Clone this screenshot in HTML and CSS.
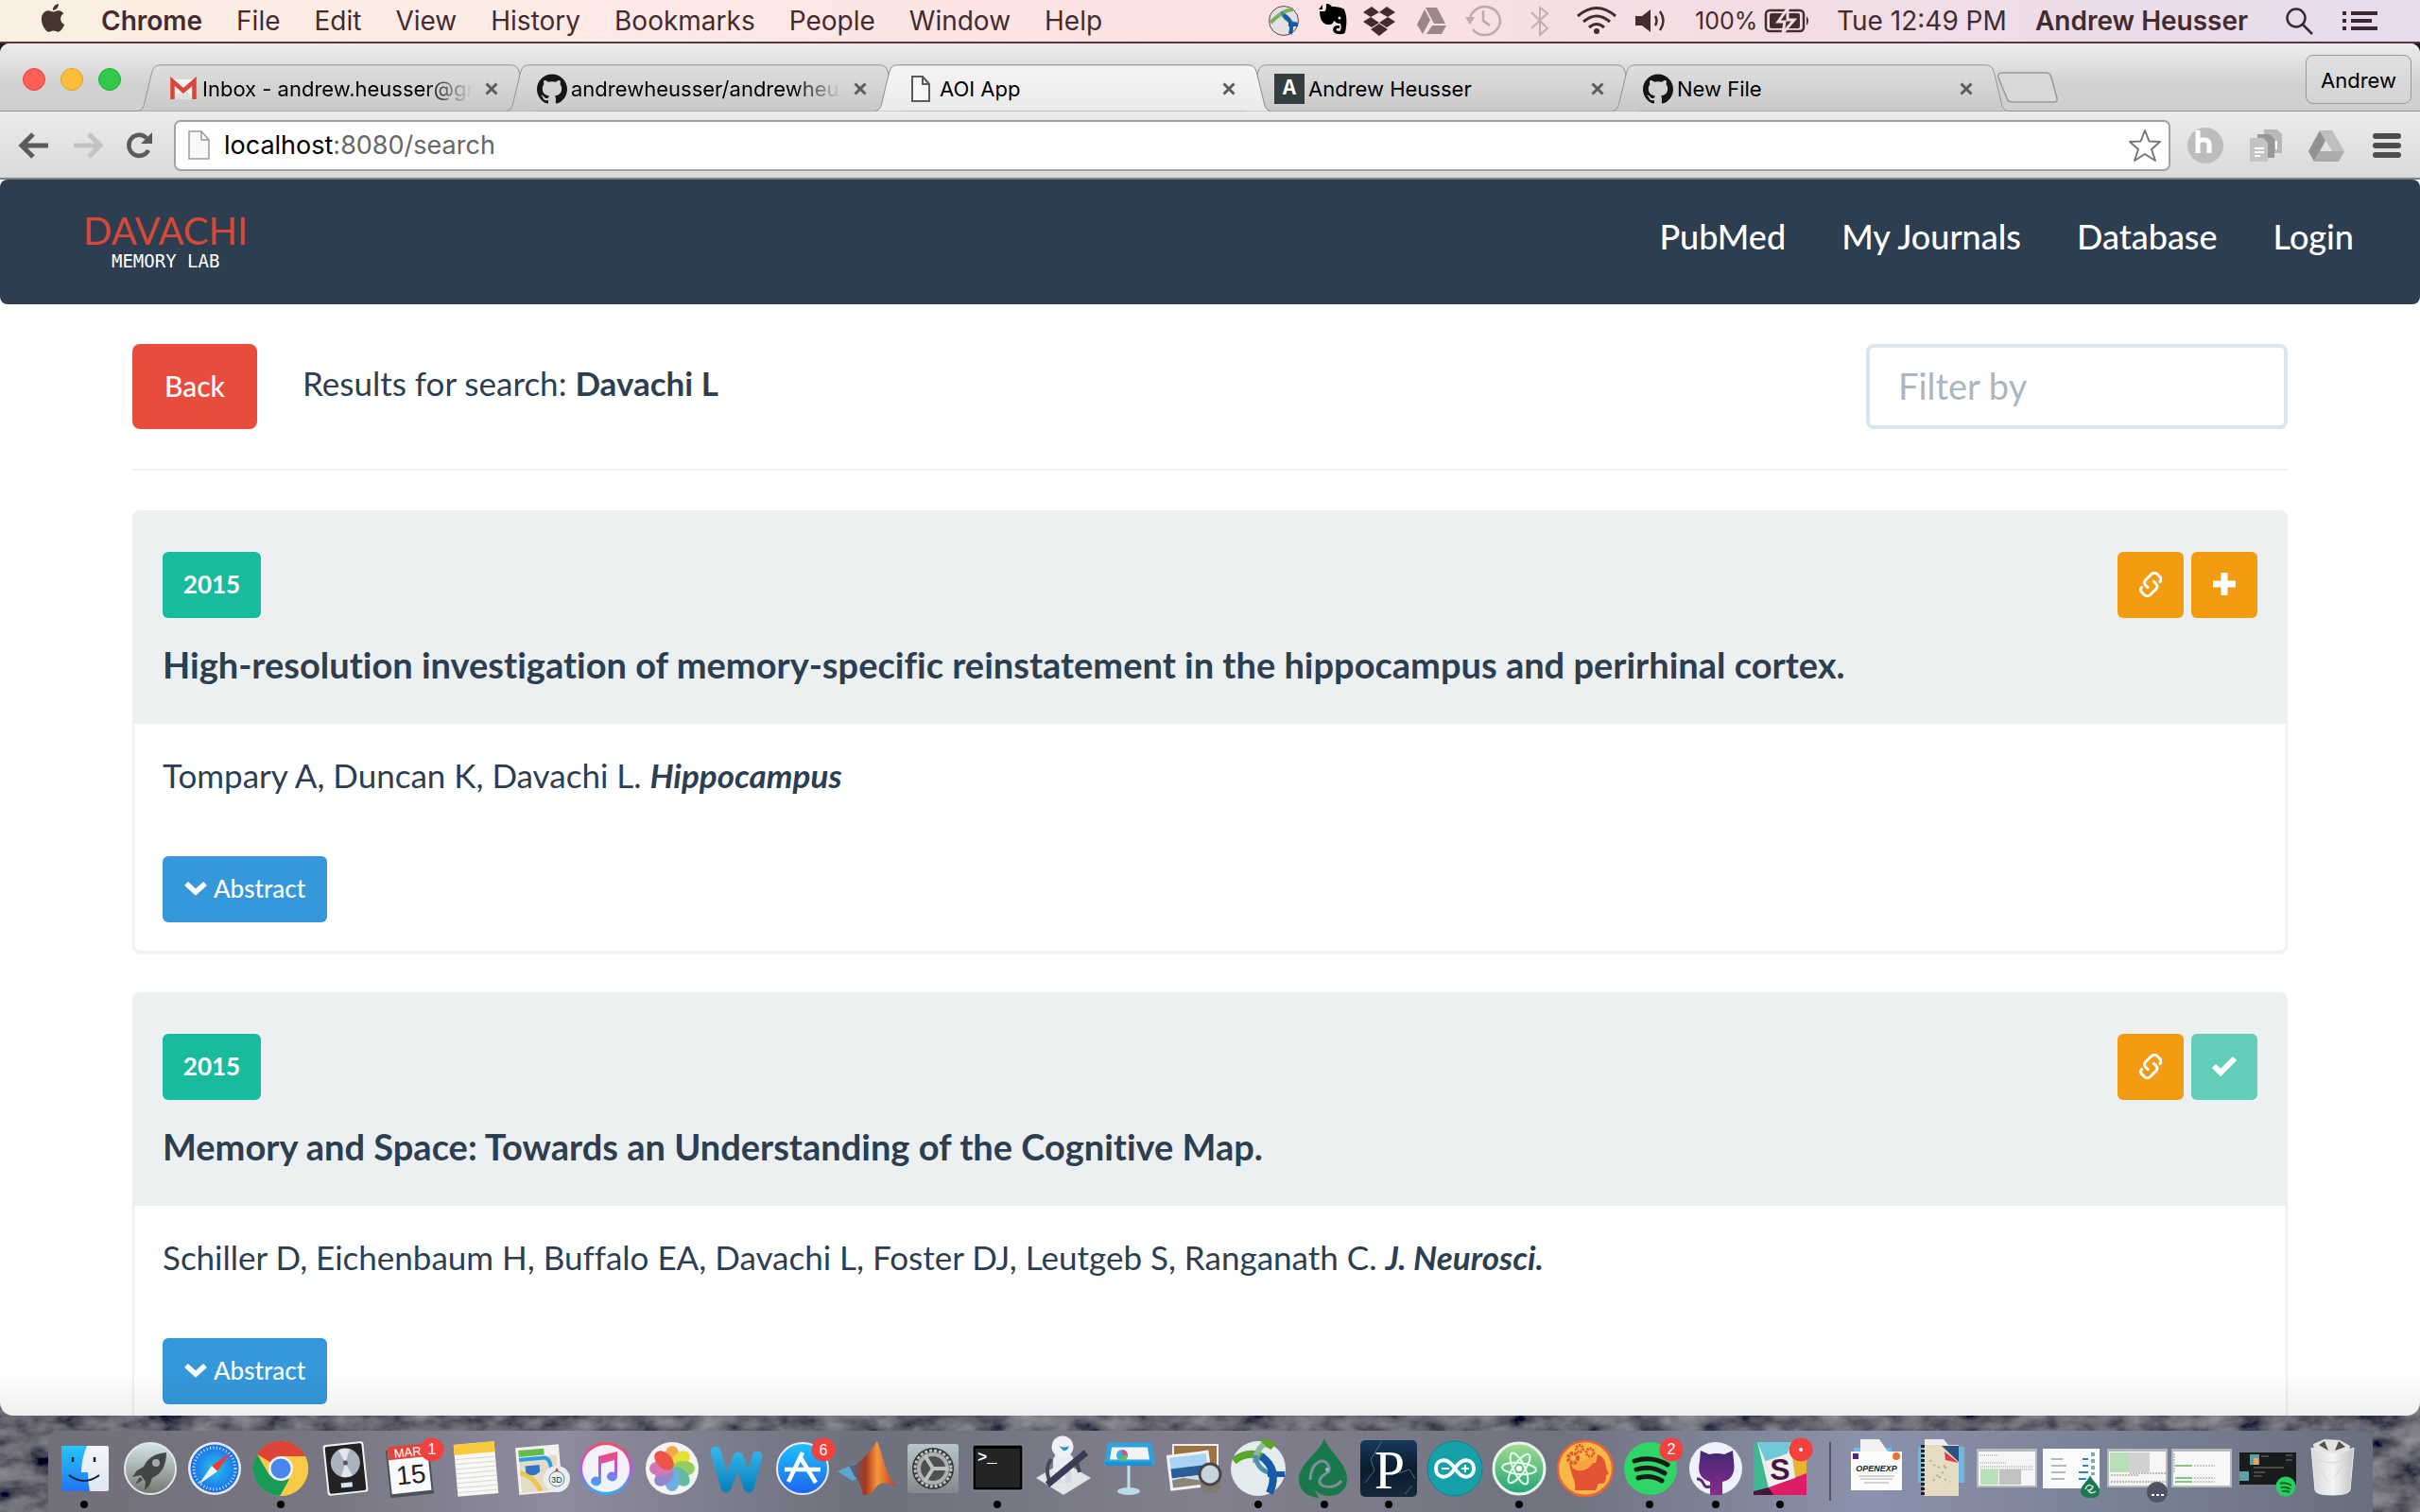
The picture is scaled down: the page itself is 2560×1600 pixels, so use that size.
FILE: index.html
```html
<!DOCTYPE html>
<html lang="en">
<head>
<meta charset="utf-8">
<title>AOI App</title>
<link rel="stylesheet" href="styles.css">
</head>
<body>
<svg class="defs" aria-hidden="true">
  <defs>
    <symbol id="github" viewBox="0 0 24 24"><path d="M12 .297c-6.63 0-12 5.373-12 12 0 5.303 3.438 9.8 8.205 11.385.6.113.82-.258.82-.577 0-.285-.01-1.04-.015-2.04-3.338.724-4.042-1.61-4.042-1.61C4.422 18.07 3.633 17.7 3.633 17.7c-1.087-.744.084-.729.084-.729 1.205.084 1.838 1.236 1.838 1.236 1.07 1.835 2.809 1.305 3.495.998.108-.776.417-1.305.76-1.605-2.665-.3-5.466-1.332-5.466-5.93 0-1.31.465-2.38 1.235-3.22-.135-.303-.54-1.523.105-3.176 0 0 1.005-.322 3.3 1.23.96-.267 1.98-.399 3-.405 1.02.006 2.04.138 3 .405 2.28-1.552 3.285-1.23 3.285-1.23.645 1.653.24 2.873.12 3.176.765.84 1.23 1.91 1.23 3.22 0 4.61-2.805 5.625-5.475 5.92.42.36.81 1.096.81 2.22 0 1.606-.015 2.896-.015 3.286 0 .315.21.69.825.57C20.565 22.092 24 17.592 24 12.297c0-6.627-5.373-12-12-12"/></symbol>
    <symbol id="link" viewBox="0 0 24 27"><g fill="none" stroke="#fff" stroke-width="3"><path d="M9 18.500L5.500 15a4 4 0 0 1 0-5L12 3.500a4.500 4.500 0 0 1 6 0l3 3a4 4 0 0 1 0 5l-1 1" transform="translate(1 -1)"/><path d="M14.500 8.500L18 12a4 4 0 0 1 0 5l-6.500 6.500a4.500 4.500 0 0 1-6 0l-3-3a4 4 0 0 1 0-5l1-1" transform="translate(0 1)"/></g></symbol>
    <symbol id="tab" viewBox="0 0 418 50"><path d="M0 49.500C5 48 6 45 7 40L14 11C16 3 18 .8 25 .8H393C400 .8 402 3 404 11L411 40C412 45 413 48 418 49.500"/></symbol>
    <symbol id="close" viewBox="0 0 16 16"><path d="M2.500 2.500l11 11M13.500 2.500l-11 11" stroke="#5d5d5d" stroke-width="3"/></symbol>
    <linearGradient id="gTab" x2="0" y2="1"><stop stop-color="#dedede"/><stop offset="1" stop-color="#c9c9c9"/></linearGradient>
    <linearGradient id="gTabOn" x2="0" y2="1"><stop stop-color="#f5f5f5"/><stop offset="1" stop-color="#ebebeb"/></linearGradient>
    <linearGradient id="gFinder" x2="0" y2="1"><stop stop-color="#26c6fb"/><stop offset="1" stop-color="#2275f1"/></linearGradient>
    <linearGradient id="gFace" x2="0" y2="1"><stop stop-color="#f4f6fa"/><stop offset="1" stop-color="#dfe6f1"/></linearGradient>
    <linearGradient id="gRocket" x2="0" y2="1"><stop stop-color="#d5e6ea"/><stop offset="1" stop-color="#76776f"/></linearGradient>
    <radialGradient id="gSafari"><stop stop-color="#28c5ee"/><stop offset="1" stop-color="#1b6ce8"/></radialGradient>
    <linearGradient id="gTunes" x2="0" y2="1"><stop stop-color="#fa4b5f"/><stop offset=".5" stop-color="#b758e6"/><stop offset="1" stop-color="#2bb1f5"/></linearGradient>
    <linearGradient id="gStore" x2="0" y2="1"><stop stop-color="#1fc3fb"/><stop offset="1" stop-color="#1d63ee"/></linearGradient>
    <linearGradient id="gWord" x2="0" y2="1"><stop stop-color="#33b4e8"/><stop offset="1" stop-color="#0b83bd"/></linearGradient>
    <linearGradient id="gMat"><stop stop-color="#3f6f91"/><stop offset=".35" stop-color="#a8351f"/><stop offset=".6" stop-color="#f5973d"/><stop offset="1" stop-color="#c0351e"/></linearGradient>
    <linearGradient id="gMetal" x2="0" y2="1"><stop stop-color="#b9c6cc"/><stop offset="1" stop-color="#83888a"/></linearGradient>
    <linearGradient id="gAtom" x2="0" y2="1"><stop stop-color="#a5dd90"/><stop offset="1" stop-color="#1fa477"/></linearGradient>
    <linearGradient id="gCat" x2="0" y2="1"><stop stop-color="#41286f"/><stop offset="1" stop-color="#8b2a91"/></linearGradient>
    <linearGradient id="gNavy" x2="0" y2="1"><stop stop-color="#173a5c"/><stop offset=".5" stop-color="#0b1b2c"/><stop offset="1" stop-color="#14293b"/></linearGradient>
    <linearGradient id="gTrash"><stop stop-color="#d6d6d8"/><stop offset=".5" stop-color="#f4f4f4"/><stop offset="1" stop-color="#c4c4c8"/></linearGradient>
    <filter id="rock" x="0" y="0" width="100%" height="100%"><feTurbulence type="fractalNoise" baseFrequency=".03 .05" numOctaves="5" seed="8"/><feColorMatrix values=".4 0 0 0 -.07  .4 0 0 0 -.07  .4 0 0 0 -.04  0 0 0 0 1"/></filter>
  </defs>
</svg>

<div class="desktop">
  <svg class="wallpaper" aria-hidden="true"><rect width="100%" height="100%" filter="url(#rock)"/></svg>

  <header class="menubar">
    <nav class="menus" aria-label="Menu bar">
      <svg class="apple" viewBox="0 0 24 25" aria-hidden="true"><path fill="#47352f" d="M12.152 6.896c-.948 0-2.415-1.078-3.960-1.040-2.040.027-3.910 1.183-4.961 3.014-2.117 3.675-.546 9.103 1.519 12.090 1.013 1.454 2.208 3.090 3.792 3.039 1.520-.065 2.090-.987 3.935-.987 1.831 0 2.350.987 3.960.948 1.637-.026 2.676-1.480 3.676-2.948 1.156-1.688 1.636-3.325 1.662-3.415-.039-.013-3.182-1.221-3.220-4.857-.026-3.040 2.480-4.494 2.597-4.559-1.429-2.090-3.623-2.324-4.390-2.376-2-.156-3.675 1.090-4.610 1.090zM15.530 3.830c.843-1.012 1.400-2.427 1.245-3.830-1.207.052-2.662.805-3.532 1.818-.780.896-1.454 2.338-1.273 3.714 1.338.104 2.715-.688 3.559-1.701"/></svg>
      <b>Chrome</b><span>File</span><span>Edit</span><span>View</span><span>History</span><span>Bookmarks</span><span>People</span><span>Window</span><span>Help</span>
    </nav>
    <div class="status">
      <svg width="45" height="44"><circle cx="18" cy="22" r="15.500" fill="#e6dfe4" stroke="#5b4a4c"/><path d="M4 24q14-14 24-14" fill="none" stroke="#79b05b" stroke-width="4"/><path d="M16 12q2 11 16 13" fill="none" stroke="#3f8a98" stroke-width="3"/><path d="M18 16q11 6 7 20M23 26h10" fill="none" stroke="#1559a8" stroke-width="4"/></svg>
      <svg width="48" height="44"><path fill="#000" d="M18 4c4 0 5 2 6 3 6 0 11 1 13 3 3 7 3 15 1 24-1 3-9 3-12 0-2-3 0-7 3-7h3v3h-3c-1 2 0 3 3 3 2-1 2-5 1-8-6 0-5-3-7-3-1 4-3 4-7 4-6-1-8-8-8-14h5c2 0 2-5 2-8z"/><path fill="#000" d="M10 10l4-5v5z"/><circle cx="32" cy="19" r="1.500" fill="#f7dfe2"/></svg>
      <svg width="55" height="44"><g fill="#432b2f"><path d="M9 13l9-6 8 6-9 5zM43 13l-9-6-8 6 9 5zM9 23l8-5 9 6-8 5zM43 23l-8-5-9 6 8 5zM17 31l9-6 9 6-9 7z"/></g></svg>
      <svg width="52" height="44"><g fill="#9b8689"><path d="M20 8h12l9 17H29zM19 10l6 11-8 15-6-10zM27 27h15l-5 9H21z"/></g></svg>
      <svg width="63" height="44" fill="none" stroke="#bfa9ae" stroke-width="2.500"><path d="M15 24a16 15 0 1 1 3 7M29 11v11l7 5"/><path fill="#bfa9ae" stroke="none" d="M10 18h10l-5 8z"/></svg>
      <svg width="52" height="44" fill="none" stroke="#c3aeb3" stroke-width="2"><path d="M17 13l17 17-8 7V8l8 6-17 16"/></svg>
      <svg width="65" height="44" fill="none" stroke="#432b2f" stroke-width="3"><path d="M14 17q20-17 40 0M20 23q14-12 28 0M26 29q8-7 16 0"/><circle cx="34" cy="33" r="3" fill="#432b2f" stroke="none"/></svg>
      <svg width="60" height="44"><path fill="#432b2f" d="M10 17h7l9-7v24l-9-7h-7z"/><path d="M31 17q3 5 0 10M36 12q7 10 0 20" fill="none" stroke="#432b2f" stroke-width="2.500"/></svg>
      <span class="percent">100%</span>
      <svg width="77" height="44"><rect x="2" y="11" width="40" height="22" rx="4" fill="none" stroke="#432b2f" stroke-width="2.500"/><rect x="6" y="14" width="32" height="16" rx="2" fill="#432b2f"/><path d="M25 9l-10 14h7l-2 12 12-14h-7z" fill="#432b2f" stroke="#f2dde2" stroke-width="3"/><path fill="#432b2f" d="M45 17q4 5 0 10z"/></svg>
      <span class="clock">Tue 12:49 PM</span>
      <b class="user">Andrew Heusser</b>
      <svg width="60" height="44" fill="none" stroke="#3b2833" stroke-width="2.500"><circle cx="11" cy="19" r="9.500"/><path d="M18 26l10 10"/></svg>
      <svg width="82" height="44" fill="#3b2833"><path d="M0 12h4v4H0zM9 12h28v4H9zM0 20h4v4H0zM9 20h22v4H9zM0 28h4v4H0zM9 28h28v4H9z"/></svg>
    </div>
  </header>

  <div class="window">
    <div class="titlebar">
      <div class="lights"><i class="light red"></i><i class="light yellow"></i><i class="light green"></i></div>
      <div class="tabs">
        <div class="tab">
          <svg class="shape" aria-hidden="true"><use href="#tab" fill="url(#gTab)" stroke="#939393"/></svg>
          <svg class="fav" viewBox="0 0 32 32" aria-hidden="true"><path fill="#f3f3f3" d="M3 6h26v21H3z"/><path fill="#dfdfdf" d="M3 27l13-11 13 11z"/><path fill="none" stroke="#dc4437" stroke-width="4.500" d="M4.500 27V8L16 18 27.500 8v19"/></svg>
          <span class="label fade">Inbox - andrew.heusser@gr</span>
          <button class="x" aria-label="Close tab"><svg width="16" height="16"><use href="#close"/></svg></button>
        </div>
        <div class="tab">
          <svg class="shape" aria-hidden="true"><use href="#tab" fill="url(#gTab)" stroke="#939393"/></svg>
          <svg class="fav" aria-hidden="true"><use href="#github" fill="#151515"/></svg>
          <span class="label fade">andrewheusser/andrewheu</span>
          <button class="x" aria-label="Close tab"><svg width="16" height="16"><use href="#close"/></svg></button>
        </div>
        <div class="tab active">
          <svg class="shape" aria-hidden="true"><use href="#tab" fill="url(#gTabOn)" stroke="#8b8b8b"/></svg>
          <svg class="fav" viewBox="0 0 32 32" aria-hidden="true"><path d="M7 3h11l7 8v18H7zM18 3v8h7" fill="#f8f8f8" stroke="#5b5b5b" stroke-width="2"/></svg>
          <span class="label">AOI App</span>
          <button class="x" aria-label="Close tab"><svg width="16" height="16"><use href="#close"/></svg></button>
        </div>
        <div class="tab">
          <svg class="shape" aria-hidden="true"><use href="#tab" fill="url(#gTab)" stroke="#939393"/></svg>
          <span class="fav letter" aria-hidden="true">A</span>
          <span class="label">Andrew Heusser</span>
          <button class="x" aria-label="Close tab"><svg width="16" height="16"><use href="#close"/></svg></button>
        </div>
        <div class="tab">
          <svg class="shape" aria-hidden="true"><use href="#tab" fill="url(#gTab)" stroke="#939393"/></svg>
          <svg class="fav" aria-hidden="true"><use href="#github" fill="#151515"/></svg>
          <span class="label">New File</span>
          <button class="x" aria-label="Close tab"><svg width="16" height="16"><use href="#close"/></svg></button>
        </div>
        <button class="newtab" aria-label="New tab"><svg width="66" height="34"><path d="M6 1h46q5 0 6 5l6 22q1 4-3 4H17q-5 0-6-4L2 6q-1-5 4-5z" fill="#d9d9d9" stroke="#999" stroke-width="1.500"/></svg></button>
      </div>
      <button class="profile">Andrew</button>
    </div>
    <div class="toolbar">
      <button class="tool" aria-label="Back"><svg width="34" height="30"><path d="M32 15H5M16 3L4 15l12 12" fill="none" stroke="#5b5b5b" stroke-width="5"/></svg></button>
      <button class="tool" aria-label="Forward"><svg width="34" height="30"><path d="M2 15h27M18 3l12 12-12 12" fill="none" stroke="#c3c3c3" stroke-width="5"/></svg></button>
      <button class="tool reload" aria-label="Reload"><svg width="30" height="30"><path d="M24 20A11 11 0 1 1 22 7" fill="none" stroke="#5b5b5b" stroke-width="4.500"/><path fill="#5b5b5b" d="M28 1v12H16z"/></svg></button>
      <div class="address">
        <svg width="24" height="32" aria-hidden="true"><path d="M1 1h13l8 9v20H1zM14 1v9h8" fill="#f8f8f8" stroke="#9a9a9a" stroke-width="1.500"/></svg>
        <a href="#">localhost<span>:8080/search</span></a>
        <svg width="38" height="38" aria-hidden="true"><path d="M19 3l4.500 11.500L35 15l-9 8 4 12-11-7-11 7 4-12-9-8 11.500-.5z" fill="#fff" stroke="#777" stroke-width="2" stroke-linejoin="round"/></svg>
      </div>
      <svg class="ext" viewBox="0 0 40 40" aria-hidden="true"><circle cx="20" cy="20" r="19" fill="#bdbdbd"/><path d="M12 4v24M12 19q0-5 5-5h2q5 0 5 5v9" fill="none" stroke="#fff" stroke-width="5"/></svg>
      <svg class="ext" viewBox="0 0 40 40" aria-hidden="true"><path fill="#b9b9b9" d="M18 3h14l5 5v20H18z"/><path fill="#989898" d="M11 8h13l5 5v20H11z"/><path fill="#c3c3c3" d="M3 12h14l5 5v20H3z"/><path d="M8 23h10M8 27h10M8 31h6M31 15v9" stroke="#fff" stroke-width="2"/></svg>
      <svg class="ext" viewBox="0 0 40 40" aria-hidden="true"><path fill="#929292" d="M13 4l6 11-12 22L1 26z"/><path fill="#bfbfbf" d="M13 4h13l13 22H26z"/><path fill="#acacac" d="M13 26h26l-6 11H7z"/></svg>
      <button class="tool" aria-label="Menu"><svg width="30" height="28" fill="#4d4d4d"><rect width="30" height="6" y="1" rx="3"/><rect width="30" height="6" y="11" rx="3"/><rect width="30" height="6" y="21" rx="3"/></svg></button>
    </div>

    <main class="page">
      <nav class="navbar">
        <a class="brand" href="#"><span class="brand-name">DAVACHI</span><span class="brand-sub">MEMORY LAB</span></a>
        <div class="links"><a href="#">PubMed</a><a href="#">My Journals</a><a href="#">Database</a><a href="#">Login</a></div>
      </nav>
      <div class="container">
        <div class="search-row">
          <button class="btn back">Back</button>
          <p class="results">Results for search: <b>Davachi L</b></p>
          <input class="filter" type="text" placeholder="Filter by" aria-label="Filter by">
        </div>
        <hr>
        <article class="card">
          <div class="card-head">
            <div class="card-actions">
              <button class="btn year">2015</button>
              <button class="btn square" aria-label="Link"><svg width="24" height="27"><use href="#link"/></svg></button>
              <button class="btn square" aria-label="Add"><svg width="24" height="24"><path d="M12 0v24M0 12h24" stroke="#fff" stroke-width="7"/></svg></button>
            </div>
            <h2>High-resolution investigation of memory-specific reinstatement in the hippocampus and perirhinal cortex.</h2>
          </div>
          <div class="card-body">
            <p>Tompary A, Duncan K, Davachi L. <b><i>Hippocampus</i></b></p>
            <button class="btn abstract"><svg width="24" height="16" aria-hidden="true"><path d="M2 3l10 9 10-9" fill="none" stroke="#fff" stroke-width="5.500"/></svg>Abstract</button>
          </div>
        </article>
        <article class="card">
          <div class="card-head">
            <div class="card-actions">
              <button class="btn year">2015</button>
              <button class="btn square" aria-label="Link"><svg width="24" height="27"><use href="#link"/></svg></button>
              <button class="btn square saved" aria-label="Saved"><svg width="28" height="24"><path d="M3 12l7 7L25 4" fill="none" stroke="#fff" stroke-width="6"/></svg></button>
            </div>
            <h2>Memory and Space: Towards an Understanding of the Cognitive Map.</h2>
          </div>
          <div class="card-body">
            <p>Schiller D, Eichenbaum H, Buffalo EA, Davachi L, Foster DJ, Leutgeb S, Ranganath C. <b><i>J. Neurosci.</i></b></p>
            <button class="btn abstract"><svg width="24" height="16" aria-hidden="true"><path d="M2 3l10 9 10-9" fill="none" stroke="#fff" stroke-width="5.500"/></svg>Abstract</button>
          </div>
        </article>
      </div>
    </main>
  </div>

  <footer class="dock-area">
    <div class="dock">
      <svg class="app"><path fill="url(#gFinder)" d="M10 16h48v48H10z"/><path fill="url(#gFace)" d="M34 16h24q2 0 2 2v44q0 2-2 2H40q-2-9-2-20h-7q0-14 6-28z"/><path d="M18 47q16 12 32 0" fill="none" stroke="#0d1f38" stroke-width="2"/><path d="M22 28v5M45 28v5" stroke="#0d1f38" stroke-width="2.500"/><circle cx="34" cy="78" r="4"/></svg>
      <svg class="app"><circle cx="35" cy="40" r="27" fill="url(#gRocket)" stroke="#e3e8e9" stroke-width="2"/><path fill="#434547" d="M52 23c-14 1-21 8-24 15l-7 4-5 7 9-2 5 7-1 9 5-5 3-8c9-4 15-12 15-27z"/><circle cx="41" cy="34" r="4" fill="#a2aaaa"/><path fill="#434547" d="M24 49l-5 8 8-5z"/></svg>
      <svg class="app"><circle cx="34" cy="40" r="28" fill="#e8edf3"/><circle cx="34" cy="40" r="25.500" fill="url(#gSafari)"/><circle cx="34" cy="40" r="22" fill="none" stroke="#d5efff" stroke-width="3" stroke-dasharray="1 2.500"/><path fill="#f23b30" d="M51 23L31 37l6 6z"/><path fill="#f4f4f4" d="M17 57l14-20 6 6z"/></svg>
      <svg class="app"><circle cx="35" cy="40" r="29" fill="#f9ca46"/><path fill="#db4437" d="M35 40L10 25a29 29 0 0 1 51 2H35z"/><path fill="#179c58" d="M35 69A29 29 0 0 1 10 25l13 22 12 6 9-2z"/><path fill="#f9ca46" d="M48 27h13a29 29 0 0 1-27 42l13-22z"/><circle cx="35" cy="40" r="13" fill="#f3f3f3"/><circle cx="35" cy="40" r="10.500" fill="#4a87ec"/><circle cx="35" cy="78" r="4"/></svg>
      <svg class="app"><g transform="rotate(-6 34 40)"><rect x="13" y="13" width="43" height="54" rx="3" fill="#f0f0f0"/><rect x="15" y="15" width="39" height="50" rx="2" fill="#222"/><circle cx="35" cy="34" r="15.500" fill="#a9b3c0"/><path fill="#e1e5ec" d="M35 34l-6-14a15 15 0 0 1 12 0zM35 34l6 14a15 15 0 0 1-12 0z"/><circle cx="35" cy="34" r="2.500" fill="#555"/><rect x="28" y="55" width="12" height="5" fill="#d8e2e8"/></g></svg>
      <svg class="app"><g transform="rotate(-6 34 40)"><path fill="#46535a" d="M10 18h46v51H10z"/><path fill="#fafafa" d="M12 16h42v49H12z"/><path fill="#e0443e" d="M12 15h42v14H12z"/><text x="33" y="27" class="t-mar">MAR</text><text x="34" y="56" class="t-day">15</text></g><circle cx="57" cy="20" r="12.500" fill="#f44140"/><text x="57" y="25" class="t-badge">1</text></svg>
      <svg class="app"><g transform="rotate(-5 34 40)"><path fill="#f9f8f4" d="M13 13h43v55H13z"/><path fill="#f9cb3c" d="M13 13h43v11H13z"/><path d="M13 29h43M13 34h43M13 39h43M13 44h43M13 49h43M13 54h43M13 59h43M13 64h43" stroke="#d5d5d5"/></g></svg>
      <svg class="app"><g transform="rotate(-5 34 40)"><path fill="#f4f2ee" d="M9 16h46v50H9z"/><path fill="#e5dcc7" d="M12 27h40v37H12z"/><path fill="#67bb4b" d="M12 19h27v7H12z"/><path d="M12 29h27q5 1 6 10l5 24" fill="none" stroke="#2b9be6" stroke-width="4"/><path d="M12 43q14 4 20 21" fill="none" stroke="#f0c648" stroke-width="5"/><path fill="#3474c4" d="M18 36h15v7q-7 7-15 0z"/></g><circle cx="51" cy="51" r="14" fill="#ededed"/><circle cx="51" cy="51" r="8" fill="#e3f2f5" stroke="#6a848d"/><text x="51" y="55" class="t-3d">3D</text><path fill="#e33" d="M51 39l2 4h-4z"/></svg>
      <svg class="app"><circle cx="34" cy="40" r="28" fill="url(#gTunes)"/><circle cx="34" cy="40" r="25" fill="#f2f3fa"/><path fill="url(#gTunes)" d="M26 27l20-5v27a5.500 5 0 1 1-3-5V31l-14 4v19a5.500 5 0 1 1-3-5z"/></svg>
      <svg class="app"><circle cx="35" cy="40" r="28" fill="#f3f3f1"/><g opacity=".9"><ellipse cx="35" cy="28" rx="8" ry="12" fill="#f7a034"/><ellipse cx="35" cy="28" rx="8" ry="12" fill="#e6dc26" transform="rotate(45 35 40)"/><ellipse cx="35" cy="28" rx="8" ry="12" fill="#8bc751" transform="rotate(90 35 40)"/><ellipse cx="35" cy="28" rx="8" ry="12" fill="#54b79a" transform="rotate(135 35 40)"/><ellipse cx="35" cy="28" rx="8" ry="12" fill="#61a7df" transform="rotate(180 35 40)"/><ellipse cx="35" cy="28" rx="8" ry="12" fill="#8c7bc6" transform="rotate(225 35 40)"/><ellipse cx="35" cy="28" rx="8" ry="12" fill="#cf6bb0" transform="rotate(270 35 40)"/><ellipse cx="35" cy="28" rx="8" ry="12" fill="#ed4437" transform="rotate(315 35 40)"/></g></svg>
      <svg class="app"><path d="M12 22l11 38 13-32 11 32 9-33" fill="none" stroke="url(#gWord)" stroke-width="11" stroke-linejoin="round" stroke-linecap="round"/></svg>
      <svg class="app"><circle cx="35" cy="40" r="27" fill="url(#gStore)" stroke="#e8edf4" stroke-width="2"/><path d="M35 23L20 54M32 27l17 28M16 41h38" stroke="#fff" stroke-width="4.500"/><circle cx="57" cy="20" r="12.500" fill="#f44140"/><text x="57" y="26" class="t-badge">6</text></svg>
      <svg class="app"><path fill="#5aa7d2" d="M3 43l20-9 10 12-14 7z"/><path fill="url(#gMat)" d="M15 37c11 0 18-10 30-26 6 15 9 36 20 48-10-4-17-6-23 3-3 5-7 6-12 6-2-9-5-16-9-20z"/></svg>
      <svg class="app"><rect x="8" y="14" width="54" height="52" rx="3" fill="url(#gMetal)"/><circle cx="35" cy="40" r="22" fill="#333"/><circle cx="35" cy="40" r="19" fill="#555" stroke="#c1c4c4" stroke-width="3" stroke-dasharray="3 2"/><circle cx="35" cy="40" r="15" fill="#4d4f50" stroke="#aeb1b1" stroke-width="4"/><path d="M35 40h16M35 40l-9-14M35 40l-9 14" stroke="#bfc2c2" stroke-width="4"/></svg>
      <svg class="app"><rect x="8" y="15" width="53" height="48" rx="2" fill="#050505" stroke="#8e979d"/><rect x="11" y="19" width="47" height="41" fill="#252525"/><text x="13" y="33" class="t-term">&gt;_</text><circle cx="34" cy="78" r="4"/></svg>
      <svg class="app"><path fill="#e3e4e6" d="M6 50l29-17 29 17-29 18z"/><rect x="24" y="24" width="22" height="27" rx="8" fill="#e9ecf1"/><circle cx="34" cy="17" r="11.500" fill="#eff1f4"/><path fill="#258dd2" d="M30 16q6 3 11 0-2 6-6 5z"/><path d="M22 30q-7 9-2 23M48 30l4 14" stroke="#45495a" stroke-width="4" fill="none"/><path d="M29 44v11M40 42v13" stroke="#d4d8e0" stroke-width="7"/><path d="M18 57l41-34" stroke="#3d3a55" stroke-width="7"/></svg>
      <svg class="app"><path fill="#f4f4f5" stroke="#2ea4df" stroke-width="5" d="M15 15h42l3 18H12z"/><path fill="#1995d5" d="M10 33h50v4H10z"/><circle cx="28" cy="26" r="6" fill="#3eaae2"/><path fill="#e84991" d="M28 26v-6a6 6 0 0 1 6 6z"/><path fill="#6bc04b" d="M28 26h6a6 6 0 0 1-9 5z"/><path d="M35 37v26" stroke="#c3dfe9" stroke-width="3"/><ellipse cx="35" cy="64" rx="12" ry="4" fill="#badbe9"/></svg>
      <svg class="app"><path fill="#9b7342" stroke="#eee" stroke-width="2" d="M13 15h47v39H13z"/><g transform="rotate(-7 32 43)"><path fill="#f2f2f2" d="M8 23h45v38H8z"/><path fill="#a9d3f5" d="M11 26h39v15H11z"/><path fill="#285d98" d="M11 38h39v10H11z"/><path fill="#c9dced" d="M11 48h39v5H11z"/><path fill="#8b8778" d="M11 50l12-1 27 7v2H11z"/></g><rect x="42" y="42" width="21" height="24" rx="8" fill="#807a6e"/><circle cx="52" cy="46" r="11" fill="#c9d6e0" stroke="#47474a" stroke-width="3"/></svg>
      <svg class="app"><circle cx="34" cy="40" r="29" fill="#e5ecee"/><path fill="none" stroke="#5ca42a" stroke-width="8" d="M8 32q16-12 31-4M37 12q8 1 13 5"/><path fill="none" stroke="#8db8a0" stroke-width="6" d="M40 14q-10 9-9 20"/><path fill="none" stroke="#4f8fae" stroke-width="5" d="M31 26q2 18 22 20"/><path fill="none" stroke="#1559a8" stroke-width="8" d="M37 27q20 14 9 39"/><path fill="none" stroke="#1559a8" stroke-width="6" d="M44 46h18"/><circle cx="34" cy="78" r="4"/></svg>
      <svg class="app"><path fill="#18784a" d="M35 8c5 15 24 26 24 43 0 11-8 18-19 18-7 0-11-3-15-6l4 8C15 70 8 62 8 51 8 35 30 23 35 8z"/><path d="M20 52c0-20 17-26 20-13 2 7-9 6-10 14-1 7 15 10 23 0" fill="none" stroke="#838ba0" stroke-width="3"/><circle cx="38" cy="41" r="2" fill="#9bc"/><circle cx="35" cy="78" r="4"/></svg>
      <svg class="app"><rect x="4" y="10" width="60" height="60" rx="5" fill="url(#gNavy)"/><path d="M9 55l10-13-4-12 12-19M45 45l11-4 6 10M51 67l8-9" stroke="#506e82" fill="none"/><text x="35" y="61" class="t-p">P</text><circle cx="34" cy="78" r="4"/></svg>
      <svg class="app"><circle cx="35" cy="40" r="29" fill="#16a1a8" stroke="#07858d"/><path d="M35 40c-9-14-20-9-20 0s11 14 20 0 20-9 20 0-11 14-20 0z" fill="none" stroke="#fff" stroke-width="4"/><path d="M21 40h8M42 40h8M46 36v8" stroke="#fff" stroke-width="2"/></svg>
      <svg class="app"><circle cx="34" cy="40" r="27" fill="url(#gAtom)" stroke="#e8f4e9" stroke-width="3"/><g fill="none" stroke="#e7fff0" stroke-width="2"><ellipse cx="34" cy="40" rx="18" ry="6" transform="rotate(5 34 40)"/><ellipse cx="34" cy="40" rx="18" ry="6" transform="rotate(65 34 40)"/><ellipse cx="34" cy="40" rx="18" ry="6" transform="rotate(125 34 40)"/></g><circle cx="34" cy="40" r="3" fill="#fff"/><circle cx="34" cy="78" r="4"/></svg>
      <svg class="app"><circle cx="35" cy="40" r="29" fill="#f6b945" stroke="#e9633a" stroke-width="2.500"/><path fill="#e25433" d="M18 34h28l2-9c7 3 9 8 9 14l3 7-3 1c0 8-1 9-8 9l-3 7H24c2-9-4-14-6-29z"/><path fill="#f5a33c" d="M19 34q18-1 26-10c3 17-22 26-26 10z"/><g fill="none" stroke="#e25433"><circle cx="22" cy="29" r="5" stroke-width="4" stroke-dasharray="3 1"/><circle cx="29" cy="19" r="3.500" stroke-width="3" stroke-dasharray="2 1"/><circle cx="40" cy="23" r="4" stroke-width="3" stroke-dasharray="2 1"/></g></svg>
      <svg class="app"><circle cx="35" cy="40" r="28" fill="#2fd566"/><path d="M18 32q18-6 35 4M20 41q15-5 30 4M22 50q13-4 25 3" fill="none" stroke="#171c18" stroke-width="5" stroke-linecap="round"/><circle cx="57" cy="20" r="12.500" fill="#f44140"/><text x="57" y="25" class="t-badge">2</text><circle cx="34" cy="78" r="4"/></svg>
      <svg class="app"><circle cx="35" cy="40" r="28" fill="#eef0fb"/><path fill="url(#gCat)" d="M19 21l9 4q8-2 16 0l9-4 1 11q3 19-12 22v14H29V54Q14 50 18 32z"/><path d="M15 51q5 0 7 5t7 3" fill="none" stroke="#582b7c" stroke-width="3"/><circle cx="35" cy="78" r="4"/></svg>
      <svg class="app"><path fill="#ededed" d="M6 12h56v56H6z"/><path fill="#70c9da" d="M10 12h35l-3 12-23 9z"/><path fill="#3eb890" d="M6 12h4l12 49-16 3z"/><path fill="#e8b331" d="M45 12h17v35l-12 3z"/><path fill="#df1c65" d="M22 60l40-15v23H25z"/><path fill="#48153e" d="M6 64l16-4 5 8H6z"/><path fill="#f0efed" d="M19 32l24-8 7 26-24 8z"/><text x="34" y="52" class="t-s">S</text><circle cx="56" cy="20" r="12.500" fill="#f44140"/><circle cx="56" cy="20" r="2" fill="#fff"/><circle cx="34" cy="78" r="4"/></svg>
      <i class="divider"></i>
      <svg class="app"><path fill="#6dbee8" d="M11 18h40v16H11z"/><path fill="#f2f2f2" d="M18 9h20l11 16H18z"/><path fill="#fcfcfc" d="M8 22h54v41H8z"/><path fill="#56217e" d="M10 24h6v6h-6z"/><circle cx="56" cy="27" r="4" fill="#e8722e"/><text x="35" y="43" class="t-open">OPENEXP</text><path d="M16 48h38M18 51h34M22 55h26" stroke="#aaa"/></svg>
      <svg class="app"><path fill="#6fb7dc" d="M10 17h49v38H10z"/><path fill="#eee" d="M17 9h20l10 12H17z"/><path fill="#e6dcc2" d="M16 15h37v54H16z"/><path fill="#304f83" d="M35 16h18v17z"/><path fill="#df3e42" d="M38 22l15 12-14-3z"/><path d="M15 15v54" stroke="#222" stroke-width="4" stroke-dasharray="3 2"/><path d="M23 31l6 8 12-2-8 12 11 5M26 53l7-9" fill="none" stroke="#b4aa98" stroke-dasharray="2 4" stroke-width="2"/></svg>
      <svg class="app"><path fill="#b6b9bb" d="M3 19h64v41H3z"/><path fill="#f5f5f5" d="M5 22h60v36H5z"/><path d="M7 26h19M7 34h28M7 38h55M7 41h55" stroke="#999" stroke-dasharray="1 1"/><path fill="#b9dfb9" d="M7 41h19v16H7z"/><path fill="#c0c1c1" d="M27 41h23v16H27z"/></svg>
      <svg class="app"><path fill="#fafbfc" d="M4 19h60v42H4z"/><path d="M13 30h12M13 37h16M13 44h15M13 51h14" stroke="#777"/><path d="M46 30h6M46 37h6M42 44h10M42 51h8" stroke="#3382bd" stroke-width="2"/><path d="M57 23v24" stroke="#8aa" stroke-width="4" stroke-dasharray="4 3"/><path fill="#147b4e" d="M54 47c2 6 10 10 10 17s-6 7-10 7-10-1-10-7 8-11 10-17z"/><path d="M49 62q2-7 8-3-1 4-5 4 3 5 8 1" fill="none" stroke="#ddd" stroke-width="1.500"/></svg>
      <svg class="app"><path fill="#b6b9bb" d="M3 19h64v41H3z"/><path fill="#f5f5f5" d="M5 22h60v36H5z"/><path fill="#b9dfb9" d="M6 23h20v21H6z"/><path fill="#d0d1d1" d="M26 23h22v21H26z"/><path d="M7 47h30M27 45h38M7 54h58" stroke="#887" stroke-dasharray="2 1"/><circle cx="56" cy="65" r="11" fill="#505363"/><path d="M50 68h3M55 68h3M60 68h3" stroke="#fff" stroke-width="2"/></svg>
      <svg class="app"><path fill="#b6b9bb" d="M2 19h64v41H2z"/><path fill="#f7f7f7" d="M4 22h60v36H4z"/><path d="M6 37h18M6 50h18M6 54h18" stroke="#83c788" stroke-width="2"/><path d="M26 37h22M26 50h22M26 54h22M5 24v20" stroke="#999" stroke-dasharray="2 1"/></svg>
      <svg class="app"><path fill="#1a1b1d" d="M5 23h60v34H5z"/><path fill="#5f9fa6" d="M16 25h10v11H16zM5 43h10v10H5z"/><path fill="#e1a46a" d="M20 29h5v7h-5z"/><path d="M28 27h8M20 39h32M20 44h12M20 48h9M54 26h7M54 31h7" stroke="#777"/><circle cx="54" cy="59" r="10.500" fill="#26ce60"/><path d="M48 56q6-2 12 2M49 60q5-1 10 2M50 64q4-1 8 1" fill="none" stroke="#162" stroke-width="2"/></svg>
      <svg class="app"><path fill="#e2e2e1" d="M14 14l12-5 16 1 11 6-2 13H16z"/><path fill="#554f48" d="M20 15l6-4 4 10zM37 21l4-10 7 6z"/><path fill="url(#gTrash)" stroke="#ededed" d="M12 18q22 12 45 0l-4 45q-2 5-19 5t-18-5z"/><path d="M19 30q14 8 29 0M22 43l8 10M44 38l-8 12" stroke="#d5d5d8" fill="none"/></svg>
    </div>
  </footer>
</div>
</body>
</html>
```
FILE: styles.css
```css
* { box-sizing: border-box; }
body { margin: 0; font-family: "Lato", sans-serif; color: #2c3e50; font-variant-ligatures: none; }
button { border: 0; padding: 0; background: none; font: inherit; color: inherit; display: flex; align-items: center; justify-content: center; }
a { color: inherit; text-decoration: none; }
.defs { position: absolute; width: 0; height: 0; }
.desktop { position: relative; height: 100vh; display: flex; flex-direction: column; background: #1c1b22; overflow: hidden; }
.wallpaper { position: absolute; left: 0; bottom: 0; width: 100%; height: 128px; }

/* System menu bar */
.menubar { height: 46px; flex: none; display: flex; justify-content: space-between; background: linear-gradient(90deg, #fbefe2, #fdeae6 25%, #fce2e3 50%, #f2dde4 75%, #e6dcee); border-bottom: 2px solid #5a363d; font: 28px/44px "Inter", sans-serif; color: #432b2f; white-space: nowrap; }
.menus { display: flex; gap: 36px; padding-left: 41px; }
.apple { width: 30px; height: 31px; margin-top: 4px; }
.status { display: flex; flex: none; }
.status svg { flex: none; }
.percent { width: 86px; padding-left: 13px; font-size: 25px; }
.clock { width: 210px; }
.user { width: 265px; }
b { font-weight: 700; }
.menubar b { font-weight: 600; }

/* Browser window */
.window { position: relative; flex: 1; min-height: 0; display: flex; flex-direction: column; background: #fff; border-radius: 10px 10px 14px 14px; overflow: hidden; }
.window::after { content: ""; position: absolute; left: 0; right: 0; bottom: 0; height: 48px; background: linear-gradient(#0000, #00000010); pointer-events: none; }
.titlebar { height: 72px; flex: none; display: flex; background: linear-gradient(#ededed, #d2d2d2 60%, #d0d0d0); border-bottom: 1px solid #919191; font-family: "Inter", sans-serif; font-size: 22px; color: #000; }
.lights { display: flex; gap: 16px; padding: 26px 18px 0 24px; }
.light { width: 24px; height: 24px; border-radius: 50%; border: 1px solid; }
.red { background: #ff5f57; border-color: #e14640; }
.yellow { background: #ffbd3e; border-color: #dfa023; }
.green { background: #34c84a; border-color: #20ad30; }
.tabs { display: flex; align-items: flex-end; flex: 1; }
.tab { position: relative; width: 390px; height: 49px; display: flex; align-items: center; gap: 4px; padding: 2px 0 0 32px; }
.tab.active { z-index: 1; height: 50px; margin-bottom: -1px; }
.shape { position: absolute; left: 0; top: 0; width: 418px; height: 50px; }
.tab .fav, .tab .label, .tab .x { position: relative; }
.fav { width: 32px; height: 32px; flex: none; }
.letter { background: #343e40; color: #fff; font: 700 24px/32px "Liberation Mono", monospace; text-align: center; }
.label { width: 286px; white-space: nowrap; line-height: 32px; }
.fade { mask-image: linear-gradient(90deg, #000 82%, transparent); }
.x { margin-left: 8px; width: 16px; height: 16px; flex: none; }
.newtab { width: 66px; height: 34px; margin: 0 0 7px 16px; }
.profile { width: 112px; height: 52px; margin: 12px 9px 0 0; padding-top: 2px; border: 1px solid #9a9a9a; border-radius: 8px; background: linear-gradient(#e0e0e0, #d3d3d3); }
.toolbar { height: 72px; flex: none; display: flex; align-items: center; padding: 2px 20px 0 19px; background: linear-gradient(#ebebeb, #dadada); border-bottom: 2px solid #7f8388; }
.tool { width: 34px; margin-right: 23px; }
.tool:last-child { width: 30px; margin: 0 0 0 5px; }
.reload { width: 30px; margin-right: 21px; }
.address { flex: 1; height: 54px; display: flex; align-items: center; gap: 14px; padding: 0 6px 0 13px; margin-right: 17px; background: #fff; border: 2px solid #a2a2a2; border-radius: 7px; font: 27px/36px "Inter", sans-serif; color: #000; }
.address a { flex: 1; }
.address span { color: #666; }
.ext { width: 40px; height: 40px; margin-right: 24px; }

/* Web page */
.page { flex: 1; min-height: 0; overflow: hidden; }
.navbar { height: 132px; display: flex; justify-content: space-between; align-items: flex-start; padding: 32px 70px 0 88px; background: #2c3e50; border-radius: 8px; color: #fff; }
.brand { display: flex; flex-direction: column; align-items: center; }
.brand-name { font-size: 40px; line-height: 44px; color: #d64937; }
.brand-sub { font: 19px/20px "DejaVu Sans Mono", monospace; }
.links { display: flex; gap: 59px; font-size: 36px; line-height: 56px; font-weight: 500; }
.container { padding: 42px 140px 0; }
.search-row { display: flex; height: 90px; }
.btn { padding-bottom: 2px; font-size: 26px; font-weight: 500; color: #fff; border-radius: 6px; height: 70px; }
.back { width: 132px; height: 90px; font-size: 30px; border-radius: 8px; background: #e74c3c; }
.results { margin: 18px auto 0 48px; font-size: 35px; line-height: 46px; }
.filter { width: 446px; padding: 0 30px 2px; border: 4px solid #dce4ec; border-radius: 8px; font: 38px "Lato", sans-serif; color: #2c3e50; background: #fff; }
.filter::placeholder { color: #acb6c0; opacity: 1; }
hr { margin: 42px 0; border: 0; height: 2px; background: #ecf0f1; }
.card { margin-bottom: 42px; border: 2px solid #ecf0f1; border-radius: 8px; box-shadow: 0 2px 2px #0000000d; }
.card-head { height: 224px; padding: 42px 30px 0; background: #ecf0f1; }
.card-actions { display: flex; gap: 8px; }
.year { width: 104px; margin-right: auto; background: #18bc9c; font-weight: 700; }
.square { width: 70px; background: #f39c12; }
.saved { background: #62cdb8; }
h2 { margin: 26px 0 0; font-size: 38px; line-height: 46px; font-weight: 700; }
.card-body { padding: 30px; }
.card-body p { margin: 0 0 62px; font-size: 35px; line-height: 48px; }
.abstract { width: 174px; gap: 7px; background: #3498db; }

/* Dock */
.dock-area { position: relative; height: 102px; flex: none; display: flex; justify-content: center; padding-top: 16px; }
.dock { display: flex; height: 86px; padding: 0 8px 0 4px; border-radius: 10px 10px 0 0; background: linear-gradient(90deg, #716f7a, #777682 12%, #8e8c9f 22%, #6d707d 35%, #82808f 50%, #70727f 65%, #8b92ac 78%, #68707f); }
.app { width: 69px; height: 86px; flex: none; overflow: visible; }
.app text { text-anchor: middle; font-family: "Liberation Sans", sans-serif; }
.divider { width: 2px; margin: 12px 13px 12px 17px; background: #535666; }
.app .t-mar { font-size: 13px; fill: #fff; }
.app .t-day { font-size: 28px; fill: #222; }
.app .t-badge { font-size: 16px; fill: #fff; }
.app .t-3d { font-size: 9px; fill: #333; }
.app .t-term { font: 700 17px "Liberation Mono", monospace; fill: #fff; text-anchor: start; }
.app .t-p { font: 58px "Liberation Serif", serif; fill: #fff; }
.app .t-s { font-size: 32px; font-weight: 700; fill: #48153e; }
.app .t-open { font-size: 9px; font-weight: 700; font-style: italic; fill: #222; }
```
